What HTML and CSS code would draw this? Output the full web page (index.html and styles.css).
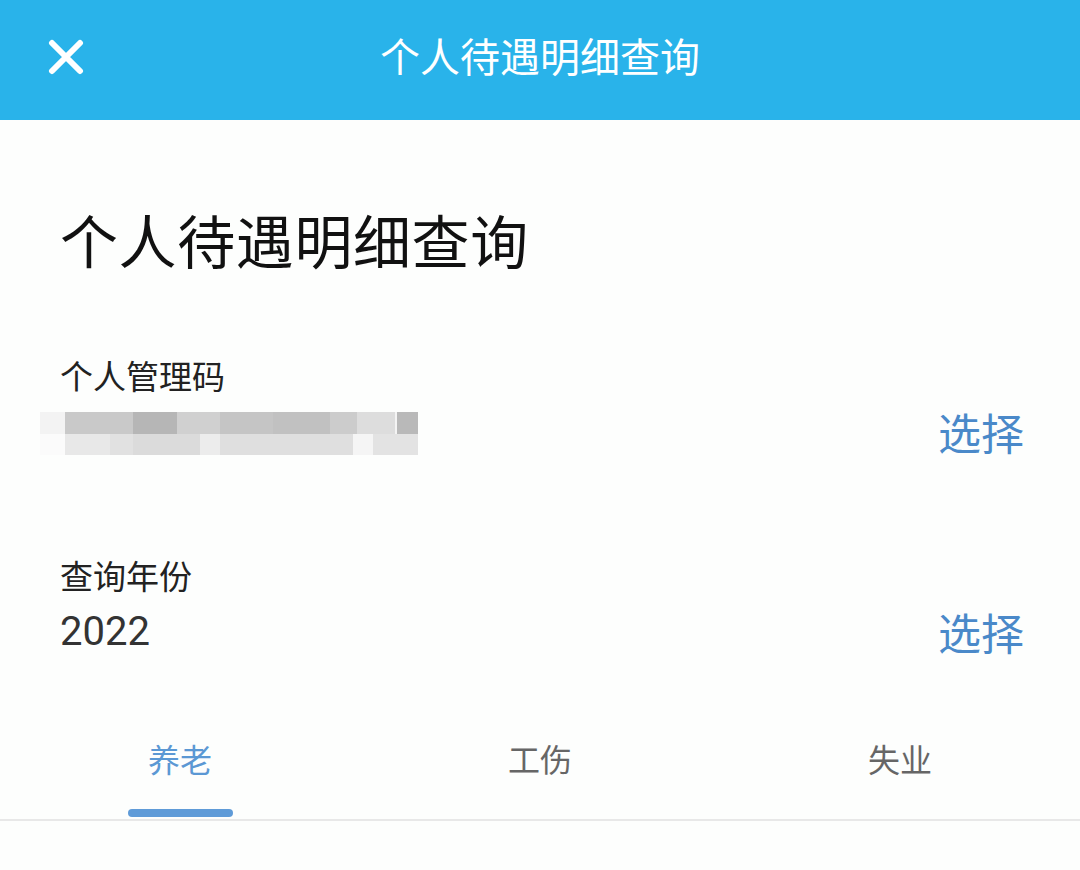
FILE: index.html
```html
<!DOCTYPE html>
<html lang="zh-CN">
<head>
    <meta charset="utf-8">
    <title>个人待遇明细查询</title>
    <link rel="stylesheet" href="styles.css">
</head>
<body>
    <div class="topbar">
        <button class="close-btn" aria-label="关闭">
            <svg width="36" height="36" viewBox="0 0 36 36">
                <path d="M4 4 L32 32 M32 4 L4 32" stroke="#fff" stroke-width="6" stroke-linecap="round" fill="none"/>
            </svg>
        </button>
        <div class="topbar-title">个人待遇明细查询</div>
        <div></div>
    </div>

    <div class="content">
        <h1 class="page-title">个人待遇明细查询</h1>

        <!-- 个人管理码 -->
        <div class="field first">
            <div class="field-label">个人管理码</div>
            <div class="field-row">
                <div class="mask">
                    <div class="mask-top"></div>
                    <div class="mask-bottom"></div>
                </div>
                <a class="pick-link">选择</a>
            </div>
        </div>

        <!-- 查询年份 -->
        <div class="field second">
            <div class="field-label">查询年份</div>
            <div class="field-row">
                <div class="field-value">2022</div>
                <a class="pick-link">选择</a>
            </div>
        </div>
    </div>

    <div class="tabs">
        <div class="tab active">
            <span>养老</span>
            <i class="tab-bar"></i>
        </div>
        <div class="tab">
            <span>工伤</span>
            <i class="tab-bar"></i>
        </div>
        <div class="tab">
            <span>失业</span>
            <i class="tab-bar"></i>
        </div>
    </div>
</body>
</html>
```

FILE: styles.css
```css
body {
    margin: 0;
    background-color: #fdfefd;
    font-family: "Noto Sans CJK SC", "Noto Sans", sans-serif;
    color: #1a1a1a;
}

/* barre du haut */
.topbar {
    height: 120px;
    background-color: #29b3ea;
    display: grid;
    grid-template-columns: 1fr auto 1fr;
    align-items: center;
}

    .topbar .close-btn {
        justify-self: start;
        margin-left: 48px;
        margin-top: -6px;
        padding: 0;
        border: none;
        background: none;
        width: 36px;
        height: 36px;
        display: flex;
    }

    .topbar .topbar-title {
        color: #fff;
        font-size: 40px;
        line-height: 48px;
        margin-top: -10px;
    }

.content {
    padding: 84px 56px 0 60px;
}

.page-title {
    margin: 0;
    font-size: 58px;
    line-height: 70px;
    font-weight: 400;
    color: #111;
    letter-spacing: 0.6px;
}

.field.first {
    margin-top: 79px;
}

.field.second {
    margin-top: 90px;
}

    .field .field-label {
        font-size: 33px;
        line-height: 44px;
        color: #222;
    }

    .field .field-row {
        height: 64px;
        margin-top: 2px;
        display: flex;
        align-items: center;
        justify-content: space-between;
    }

    .field .field-value {
        font-family: Roboto, "Noto Sans", sans-serif;
        font-size: 40px;
        color: #333;
    }

    .field .pick-link {
        font-size: 43px;
        color: #4a89c9;
        cursor: pointer;
    }

/* code masqué (pixelisé) */
.mask {
    margin-left: -20px;
    margin-top: 4px;
    width: 378px;
}

    .mask .mask-top {
        height: 22px;
        background: linear-gradient(to right,
            #f3f3f3 0 25px, #c9c9c9 25px 93px, #b6b6b6 93px 137px,
            #d0d0d0 137px 180px, #c5c5c5 180px 233px, #c1c1c1 233px 290px,
            #cccccc 290px 317px, #dddddd 317px 355px, #f4f4f4 355px 357px,
            #b9b9b9 357px 378px);
    }

    .mask .mask-bottom {
        height: 21px;
        background: linear-gradient(to right,
            #fbfbfb 0 25px, #e8e8e8 25px 70px, #e1e1e1 70px 93px,
            #dbdbdb 93px 160px, #ececec 160px 180px, #dfdfdf 180px 313px,
            #f5f5f5 313px 333px, #e3e3e3 333px 378px);
    }

/* onglets */
.tabs {
    margin-top: 36px;
    display: flex;
    border-bottom: 2px solid #e8e8e8;
}

    .tabs .tab {
        flex: 1;
        height: 120px;
        box-sizing: border-box;
        padding-top: 37px;
        display: flex;
        flex-direction: column;
        align-items: center;
        font-size: 32px;
        line-height: 44px;
        color: #666;
    }

    .tabs .tab-bar {
        margin-top: auto;
        margin-bottom: 2px;
        width: 105px;
        height: 8px;
        border-radius: 4px;
    }

    .tabs .tab.active {
        color: #5b98d4;
    }

        .tabs .tab.active .tab-bar {
            background-color: #5f9bd8;
        }
```
